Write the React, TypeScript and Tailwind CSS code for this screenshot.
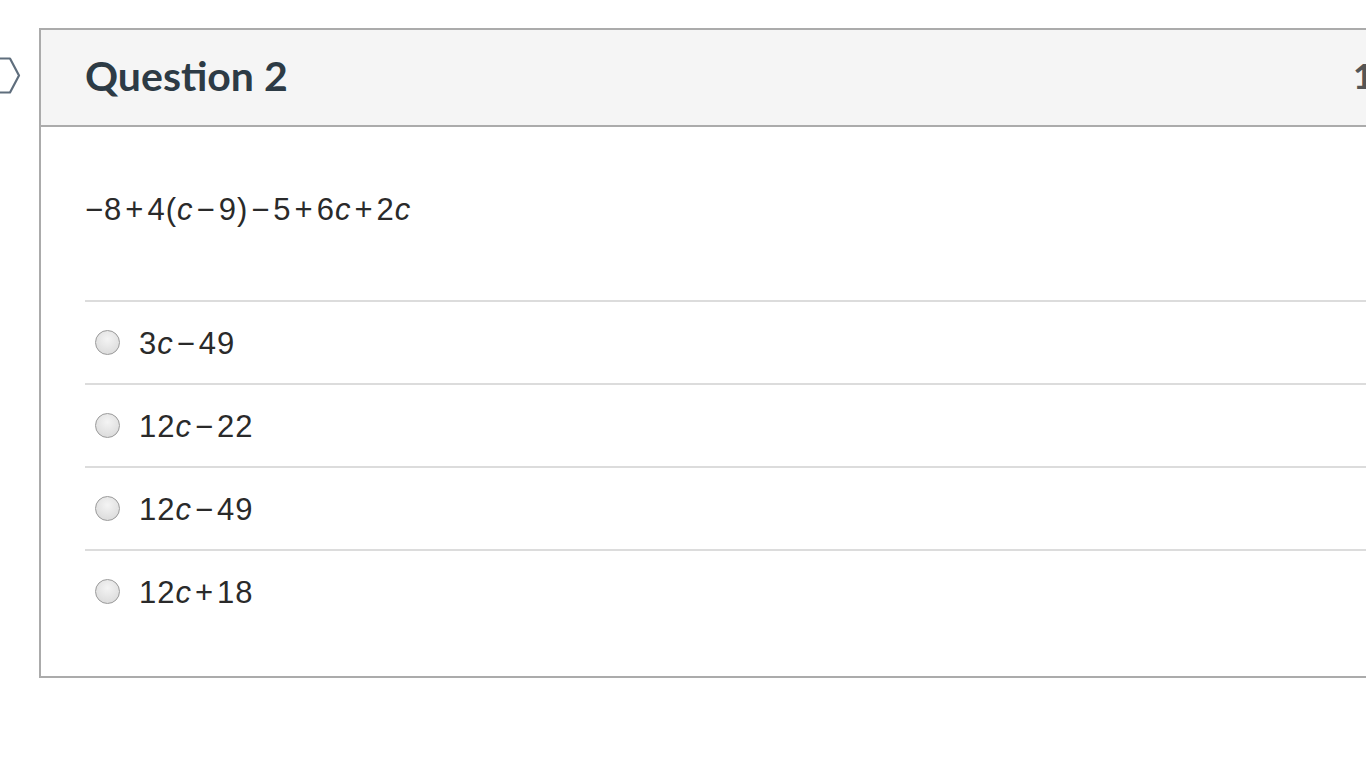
import React from "react";

const mathFont = { fontFamily: '"Liberation Sans", Arial, sans-serif' };

function C() {
  return <span className="italic">c</span>;
}

function Op({ children }: { children: React.ReactNode }) {
  return <span className="mx-[3px]">{children}</span>;
}

function Radio() {
  return (
    <span className="inline-block w-[25px] h-[25px] rounded-full border border-[#9a9a9a] bg-[radial-gradient(circle_at_50%_35%,#f4f4f4,#d6d6d6)] shrink-0" />
  );
}

const answers: React.ReactNode[] = [
  <>3<C /><Op>−</Op>49</>,
  <>12<C /><Op>−</Op>22</>,
  <>12<C /><Op>−</Op>49</>,
  <>12<C /><Op>+</Op>18</>,
];

export default function App() {
  return (
    <div className="relative w-[1366px] h-[768px] overflow-hidden bg-white">
      <svg
        className="absolute left-[-12px] top-[57px]"
        width="34"
        height="37"
        viewBox="0 0 34 37"
        fill="none"
      >
        <path
          d="M10 1.5 H22 L31 18.5 L22 35.5 H10 L1 18.5 Z"
          stroke="#5f6e7d"
          strokeWidth="2.2"
          strokeLinejoin="round"
        />
      </svg>
      <div className="pt-[28px] pl-[39px]">
        <div className="w-[1460px] border-2 border-[#ababab] border-r-0">
          <div
            className="h-[97px] bg-[#f5f5f5] border-b-2 border-[#ababab] flex items-center pl-[44px] pb-[4px]"
            style={{ fontFamily: 'Lato, "Open Sans", sans-serif' }}
          >
            <span className="w-[1268px] shrink-0 text-[41px] font-bold text-[#2d3b45] leading-none">Question 2</span>
            <span className="text-[35px] font-bold text-[#555555] leading-none whitespace-nowrap">
              1 pts
            </span>
          </div>
          <div className="pl-[44px] pt-[67px] pb-[44px]">
            <div className="text-[31px] leading-none text-[#2a2a2a] tracking-[1px]" style={mathFont}>
              −8<Op>+</Op>4(<C /><Op>−</Op>9)<Op>−</Op>5<Op>+</Op>6<C /><Op>+</Op>2<C />
            </div>
            <div className="mt-[75px]">
              {answers.map((a, i) => (
                <div key={i} className="h-[83px] border-t-2 border-[#dcdcdc] flex items-center pl-[10px]">
                  <Radio />
                  <span className="ml-[19px] pt-[2px] text-[31px] leading-none text-[#2a2a2a] tracking-[1px]" style={mathFont}>
                    {a}
                  </span>
                </div>
              ))}
            </div>
          </div>
        </div>
      </div>
    </div>
  );
}
